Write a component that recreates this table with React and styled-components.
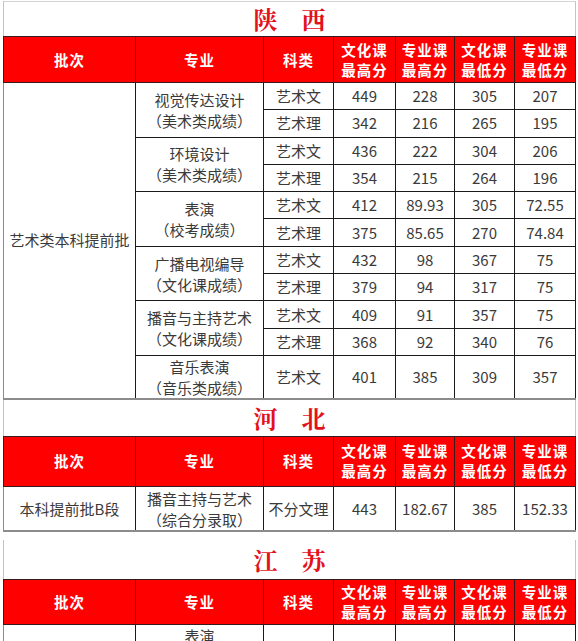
import React from 'react';
import styled, { createGlobalStyle } from 'styled-components';

const GlobalStyle = createGlobalStyle`
    body {
        margin: 0;
        background: #ffffff;
        font-family: "Noto Sans CJK SC", "Liberation Sans", sans-serif;
    }
`;

const COLS = [132, 128, 70, 62, 59, 60, 61];
const SCORE_HEADS = [
    ['文化课', '最高分'],
    ['专业课', '最高分'],
    ['文化课', '最低分'],
    ['专业课', '最低分'],
];

const provinces = [
    {
        name: '陕　西',
        gap: 0,
        titleHeight: 34,
        headHeight: 46,
        batch: '艺术类本科提前批',
        majors: [
            { lines: ['视觉传达设计', '（美术类成绩）'], rows: [['艺术文', '449', '228', '305', '207'], ['艺术理', '342', '216', '265', '195']] },
            { lines: ['环境设计', '（美术类成绩）'], rows: [['艺术文', '436', '222', '304', '206'], ['艺术理', '354', '215', '264', '196']] },
            { lines: ['表演', '（校考成绩）'], rows: [['艺术文', '412', '89.93', '305', '72.55'], ['艺术理', '375', '85.65', '270', '74.84']] },
            { lines: ['广播电视编导', '（文化课成绩）'], rows: [['艺术文', '432', '98', '367', '75'], ['艺术理', '379', '94', '317', '75']] },
            { lines: ['播音与主持艺术', '（文化课成绩）'], rows: [['艺术文', '409', '91', '357', '75'], ['艺术理', '368', '92', '340', '76']] },
            { lines: ['音乐表演', '（音乐类成绩）'], rowHeight: 42, rows: [['艺术文', '401', '385', '309', '357']] },
        ],
    },
    {
        name: '河　北',
        gap: 0,
        titleHeight: 36,
        headHeight: 50,
        batch: '本科提前批B段',
        majors: [
            { lines: ['播音主持与艺术', '（综合分录取）'], rowHeight: 45, rows: [['不分文理', '443', '182.67', '385', '152.33']] },
        ],
    },
    {
        name: '江　苏',
        gap: 8,
        titleHeight: 39,
        headHeight: 45,
        batch: '艺术类本科批',
        majors: [
            { lines: ['表演', '（戏剧影视表演）', '（校考成绩）'], rowHeight: 58, rows: [['艺术类', '378', '87.5', '352', '80.25']] },
        ],
    },
];

function ProvinceTable({ province }) {
    const rowCount = province.majors.reduce((n, m) => n + m.rows.length, 0);

    return (
        <Section $gap={province.gap}>
            <Title $height={province.titleHeight}>{province.name}</Title>
            <Table>
                <colgroup>
                    {COLS.map((w, i) => <col key={i} style={{ width: w }} />)}
                </colgroup>
                <thead>
                    <HeadRow $height={province.headHeight}>
                        <HeadCell>批次</HeadCell>
                        <HeadCell>专业</HeadCell>
                        <HeadCell>科类</HeadCell>
                        {SCORE_HEADS.map(([a, b]) => (
                            <HeadCell key={a + b}>{a}<br />{b}</HeadCell>
                        ))}
                    </HeadRow>
                </thead>
                <tbody>
                    {province.majors.map((major, mi) =>
                        major.rows.map((row, ri) => (
                            <BodyRow key={`${mi}-${ri}`} $height={major.rowHeight || 27.3}>
                                {mi === 0 && ri === 0 && (
                                    <Cell rowSpan={rowCount}>{province.batch}</Cell>
                                )}
                                {ri === 0 && (
                                    <MajorCell rowSpan={major.rows.length}>
                                        {major.lines.map((l, li) => <div key={li}>{l}</div>)}
                                    </MajorCell>
                                )}
                                {row.map((v, ci) => <Cell key={ci}>{v}</Cell>)}
                            </BodyRow>
                        ))
                    )}
                </tbody>
            </Table>
        </Section>
    );
}

export default function App() {
    return (
        <Page>
            <GlobalStyle />
            {provinces.map(p => <ProvinceTable key={p.name} province={p} />)}
        </Page>
    );
}

const Page = styled.div`
    width: 573px;
    padding: 1px 0 0 3px;
`;

const Section = styled.section`
    margin-top: ${p => p.$gap}px;
    border-left: 1px solid #c4c4c4;
    border-right: 1px solid #c4c4c4;
    &:first-child {
        border-top: 1px solid #d4d4d4;
    }
`;

const Title = styled.div`
    height: ${p => p.$height}px;
    display: flex;
    align-items: center;
    justify-content: center;
    color: #e3111b;
    font-family: "Noto Serif CJK SC", "Noto Sans CJK SC", serif;
    font-weight: 700;
    font-size: 24px;
    line-height: 1;
`;

const Table = styled.table`
    width: 573px;
    margin-left: -1px;
    border-collapse: collapse;
    table-layout: fixed;
    border-bottom: 2px solid #8c8c8c;
`;

const HeadRow = styled.tr`
    height: ${p => p.$height}px;
    background: #fe0000;
`;

const HeadCell = styled.th`
    border: 1px solid #3a1a1a;
    padding: 0;
    color: #ffffff;
    font-size: 14.5px;
    font-weight: 700;
    line-height: 20px;
    letter-spacing: 1px;
    text-align: center;
    vertical-align: middle;
`;

const BodyRow = styled.tr`
    height: ${p => p.$height}px;
`;

const Cell = styled.td`
    border: 1px solid #1a1a1a;
    padding: 0;
    color: #3a3a3a;
    font-size: 15px;
    line-height: 20px;
    text-align: center;
    vertical-align: middle;
    white-space: nowrap;
    &:first-child {
        border-left-color: #8c8c8c;
    }
`;

const MajorCell = styled(Cell)`
    line-height: 21px;
`;
